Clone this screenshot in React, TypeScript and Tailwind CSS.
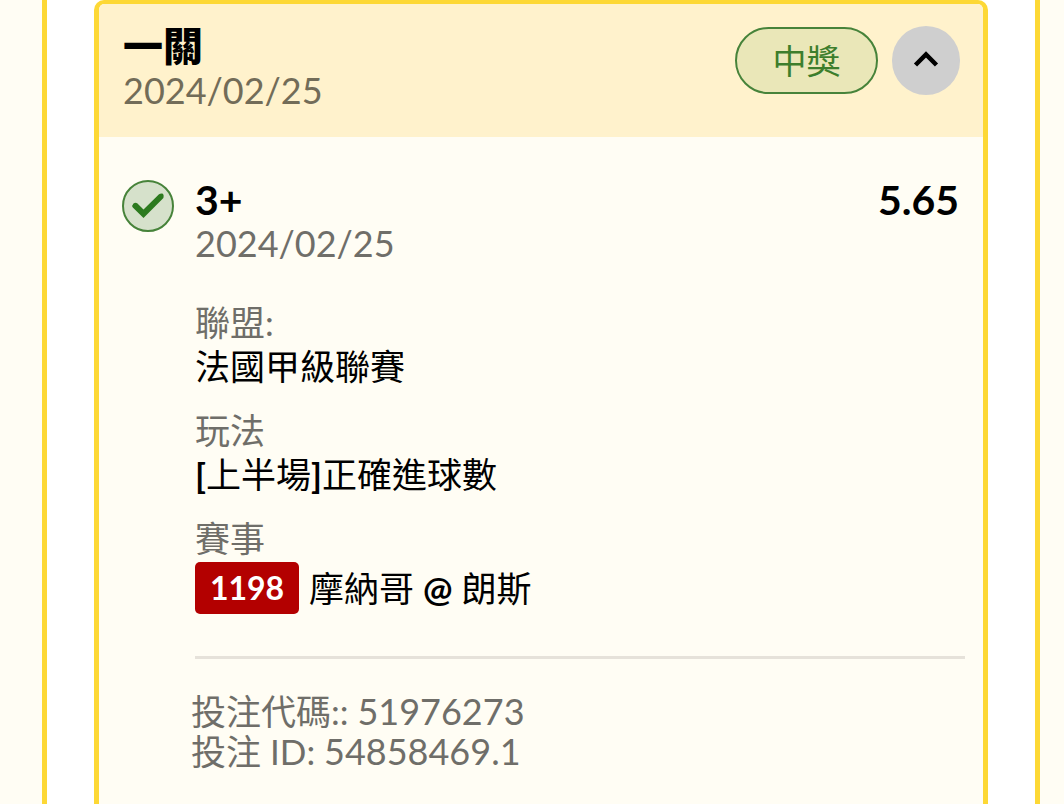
import React from 'react'

interface Detail {
  label: string
  value: React.ReactNode
}

const details: Detail[] = [
  { label: '聯盟:', value: '法國甲級聯賽' },
  {
    label: '玩法',
    value: <><span className="font-bold">[</span>上半場<span className="font-bold">]</span>正確進球數</>
  }
]

function WinIcon (): React.JSX.Element {
  return (
    <svg className="w-[52px] h-[52px] shrink-0" viewBox="0 0 52 52" fill="none" role="img" aria-label="中獎">
      <circle cx="26" cy="26" r="25" fill="#d6e1cb" stroke="#47833a" strokeWidth="2" />
      <path d="M10.800 27.500Q9.500 25.500 11.500 23.500 13.500 21.800 15.500 23.500L21.500 29.500 37 14.200Q39 13 41 13.800 42.200 15.500 41.400 18L21.500 38Z" fill="#2d7a1f" />
    </svg>
  )
}

function BetHeader (): React.JSX.Element {
  return (
    <header className="flex items-start justify-between bg-[#fff2cc] h-[133px] pl-6 pr-[23px] pt-[22px]">
      <div className="-mt-[2px]">
        <h2 className="text-[40px] leading-[44px] font-black text-black">一關</h2>
        <p className="text-[36px] leading-[44px] text-[#726c58]">2024/02/25</p>
      </div>
      <div className="flex items-center gap-[14px]">
        <span className="flex items-center justify-center w-[143px] h-[67px] rounded-full border-2 border-[#47833a] bg-[#eae7b8] text-[34px] text-[#3d7e2c]">中獎</span>
        <button type="button" aria-label="收合" className="flex items-center justify-center w-[68px] h-[69px] rounded-full bg-[#cfcfcf]">
          <svg className="w-7 h-7" viewBox="0 0 28 28" fill="none" stroke="#000" strokeWidth="4.5">
            <path d="M3.500 18 14 7.500 24.500 18" />
          </svg>
        </button>
      </div>
    </header>
  )
}

export default function App (): React.JSX.Element {
  return (
    <div className="min-h-screen flex bg-[#fffdf4] pl-[42px] pr-6 font-['Lato','Noto_Sans_CJK_TC',sans-serif]" lang="zh-TW">
      <main className="flex-1 flex bg-white border-x-5 border-[#fdd835] px-[47px]">
        <article className="flex-1 bg-[#fffdf4] border-5 border-b-0 border-t-4 border-[#fdd835] rounded-t-[10px] overflow-hidden">
          <BetHeader />
          <section className="flex items-start gap-[21px] pl-[23px] pr-[18px] pt-[43px]">
            <WinIcon />
            <div className="flex-1">
              <div className="flex justify-between pr-[6px] text-[41px] leading-[40px] font-bold text-black">
                <h3>3+</h3>
                <p>5.65</p>
              </div>
              <p className="text-[36px] leading-[46px] text-[#6f6e69]">2024/02/25</p>

              <dl className="mt-[34px] text-[35px] leading-[44px]">
                {details.map(({ label, value }) => (
                  <div key={label} className="mb-5">
                    <dt className="text-[#6f6e69]">{label}</dt>
                    <dd className="text-black">{value}</dd>
                  </div>
                ))}
                <dt className="text-[#6f6e69]">賽事</dt>
                <dd className="flex items-center gap-[10px] mt-[2px] text-black">
                  <span className="flex items-center justify-center w-[104px] h-[52px] rounded-[5px] bg-[#b30000] text-[32px] font-bold text-white">1198</span>
                  <span>摩納哥 <span className="font-bold">@</span> 朗斯</span>
                </dd>
              </dl>

              <hr className="mt-[42px] border-t-3 border-[#e6e2da]" />

              <div className="mt-8 -ml-1 text-[35px] leading-[40px] text-[#6f6e69]">
                <p>投注代碼:: <span className="text-[36px]">51976273</span></p>
                <p>投注 ID: <span className="text-[36px]">54858469.1</span></p>
              </div>
            </div>
          </section>
        </article>
      </main>
    </div>
  )
}
